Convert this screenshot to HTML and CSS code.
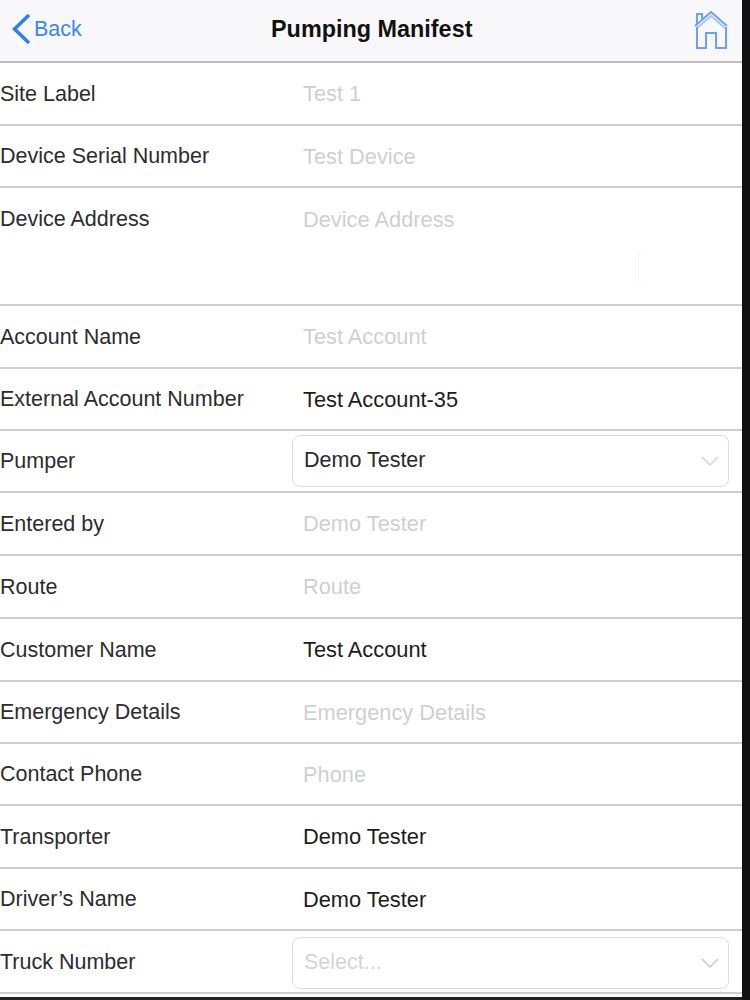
FILE: index.html
```html
<!DOCTYPE html>
<html lang="en">
<head>
<meta charset="utf-8">
<title>Pumping Manifest</title>
<link rel="stylesheet" href="styles.css">
</head>
<body>
<div class="frame">
  <main class="screen">
    <header class="nav">
      <a class="back">
        <svg class="back-icon" width="22" height="32" viewBox="0 0 22 32" fill="none"><path d="M18 2 L3.500 16 L18 30" stroke="#2f80ed" stroke-width="3.500"/></svg>
        <span>Back</span>
      </a>
      <h1 class="title">Pumping Manifest</h1>
      <svg class="home" width="36" height="40" viewBox="0 0 36 40" fill="none" stroke="#6d9ff2" stroke-width="2">
        <path d="M2 17 L18 3 L34 17"/>
        <path d="M4 19 L18 7 L32 19" stroke="#a9c6f6"/>
        <path d="M4 15 V5 H9 V10" stroke="#6d9ff2" stroke-width="2"/>
        <path d="M4 18 V39 H13 V24 H23 V39 H33 V18"/>
      </svg>
    </header>
    <div class="row"><span class="label">Site Label</span><span class="value ph">Test 1</span></div>
    <div class="row"><span class="label">Device Serial Number</span><span class="value ph">Test Device</span></div>
    <div class="row tall"><span class="label">Device Address</span><span class="value ph">Device Address</span><i class="cursor"></i></div>
    <div class="row"><span class="label">Account Name</span><span class="value ph">Test Account</span></div>
    <div class="row"><span class="label">External Account Number</span><span class="value">Test Account-35</span></div>
    <div class="row short"><span class="label">Pumper</span>
      <div class="select"><span>Demo Tester</span><svg class="chev" width="18" height="10" viewBox="0 0 18 10" fill="none"><path d="M1 1 L9 9 L17 1" stroke="#d4d4d8" stroke-width="1.500"/></svg></div></div>
    <div class="row long"><span class="label">Entered by</span><span class="value ph">Demo Tester</span></div>
    <div class="row"><span class="label">Route</span><span class="value ph">Route</span></div>
    <div class="row long"><span class="label">Customer Name</span><span class="value">Test Account</span></div>
    <div class="row short"><span class="label">Emergency Details</span><span class="value ph">Emergency Details</span></div>
    <div class="row"><span class="label">Contact Phone</span><span class="value ph">Phone</span></div>
    <div class="row"><span class="label">Transporter</span><span class="value">Demo Tester</span></div>
    <div class="row"><span class="label">Driver’s Name</span><span class="value">Demo Tester</span></div>
    <div class="row"><span class="label">Truck Number</span>
      <div class="select empty"><span>Select...</span><svg class="chev" width="18" height="10" viewBox="0 0 18 10" fill="none"><path d="M1 1 L9 9 L17 1" stroke="#c8c8cc" stroke-width="1.500"/></svg></div></div>
  </main>
  <div class="edge"></div>
</div>
</body>
</html>
```

FILE: styles.css
```css
* { box-sizing: border-box; }
html, body { margin: 0; padding: 0; background: #fff; }
body { height: 1000px; overflow: hidden; font-family: "Liberation Sans", Arial, sans-serif; }
.frame { display: flex; height: 1000px; }
.screen { width: 742px; height: 1000px; overflow: hidden; border-bottom: 3px solid #222; display: flex; flex-direction: column; }
.edge { width: 8px; background: #111; }
.nav { height: 63px; flex: none; display: flex; align-items: center; justify-content: space-between; background: #f8f7f9; border-bottom: 2px solid #bdbdbd; padding: 0 13px 3px 11px; position: relative; }
.back { display: flex; align-items: center; gap: 1px; color: #3c87e8; font-size: 21.5px; }
.title { margin: 0; font-size: 23.4px; font-weight: 700; color: #111; position: absolute; left: 271px; top: 15px; line-height: 28px; }
.home { flex: none; }
.row { height: 62.5px; flex: none; display: flex; align-items: center; border-bottom: 2px solid #cfcfcf; font-size: 21.5px; color: #2c2c30; padding-top: 2px; position: relative; }
.short { height: 61.5px; }
.long { height: 63.5px; }
.tall { height: 118px; align-items: flex-start; padding-top: 19px; }
.label { width: 303px; flex: none; white-space: nowrap; }
.value { color: #1c1c1f; white-space: nowrap; font-size: 21.8px; }
.ph { color: #cfcfd2; }
.cursor { position: absolute; left: 638px; top: 65px; width: 4px; height: 29px; border: 1px solid #f3f3f3; border-right: none; }
.select { width: 437px; height: 52px; margin-left: -11px; margin-top: -2px; display: flex; align-items: center; justify-content: space-between; border: 1.500px solid #dcdcdf; border-radius: 8px; padding: 0 9px 0 11px; color: #2a2a2e; background: #fff; }
.empty { color: #d4d4d6; margin-top: 1px; }
```
